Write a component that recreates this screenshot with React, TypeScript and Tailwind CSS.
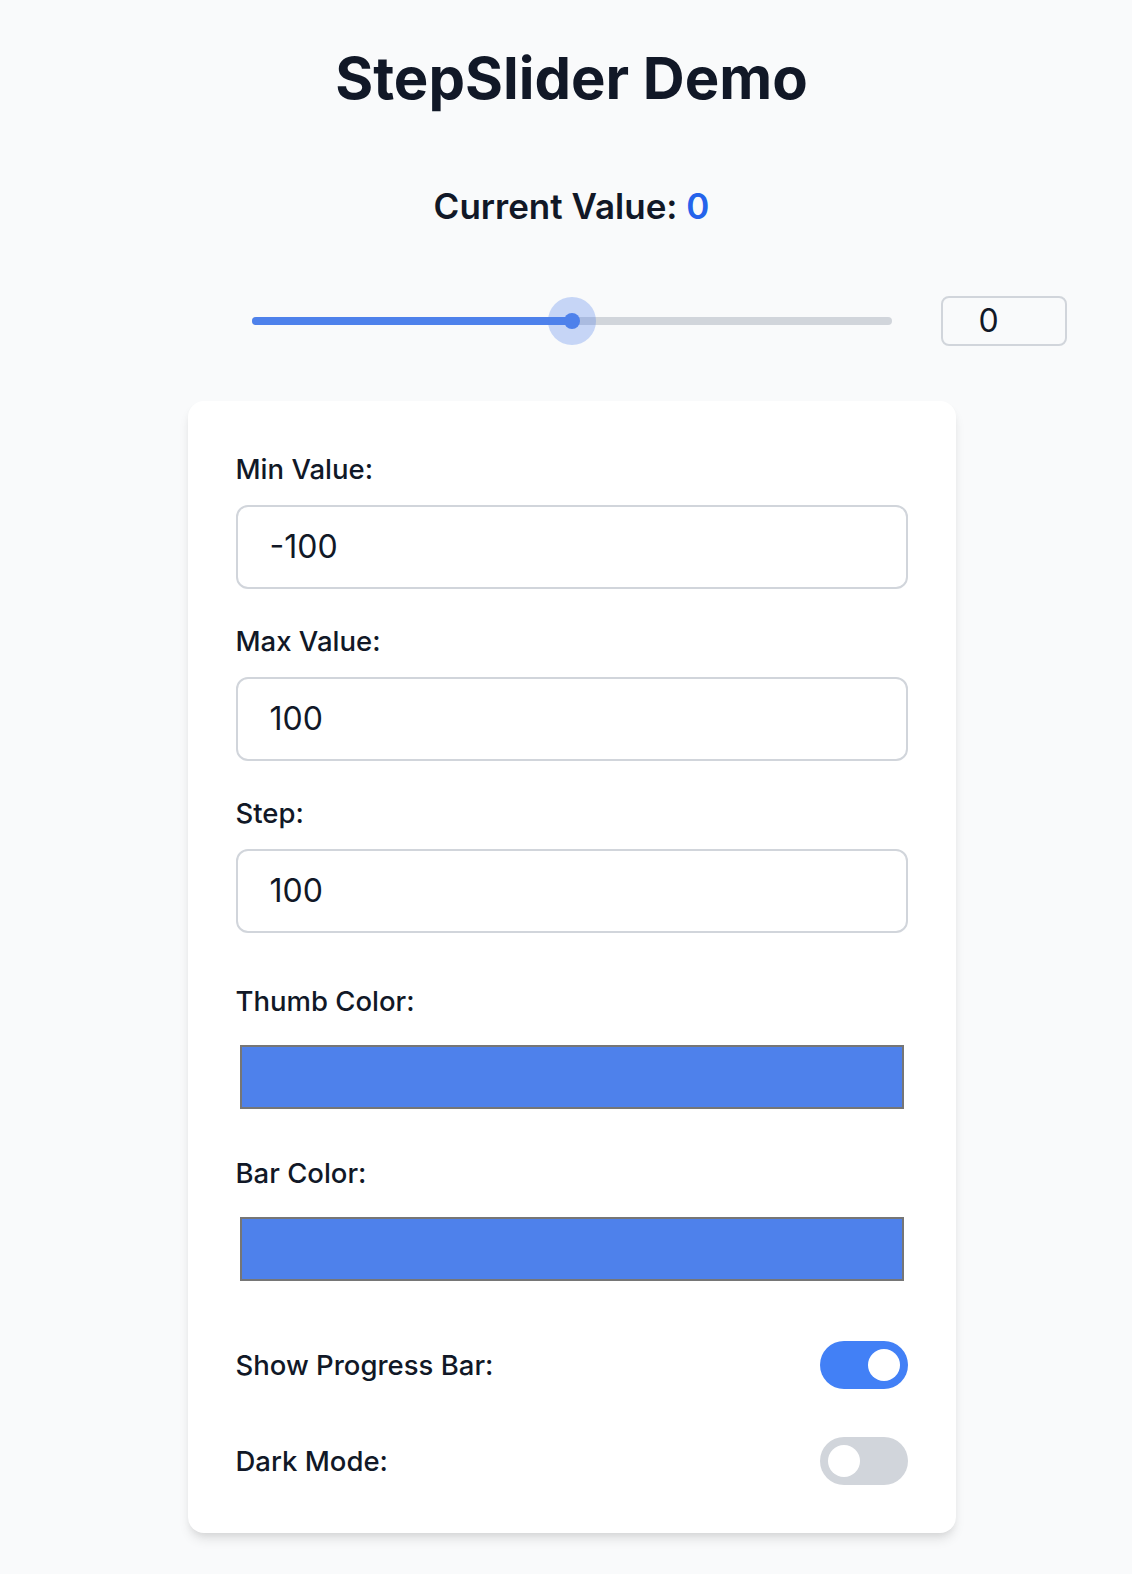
import React from "react";

const font = { fontFamily: 'Inter, "Noto Sans", "Liberation Sans", sans-serif' };

function TextField({ label, value, top }: { label: string; value: string; top: string }) {
  return (
    <div className={top}>
      <label className="block text-[27.5px] leading-[40px] font-medium text-[#111827] mb-[16px]">{label}</label>
      <div className="h-[84px] w-full border-2 border-[#d1d5db] rounded-[12px] bg-white px-[32px] flex items-center text-[32px] text-[#111827]">
        {value}
      </div>
    </div>
  );
}

function ColorField({ label, top }: { label: string; top: string }) {
  return (
    <div className={top}>
      <label className="block text-[27.5px] leading-[40px] font-medium text-[#111827] mb-[16px]">{label}</label>
      <div className="h-[80px] w-full px-[4px] py-[8px]">
        <div className="h-full w-full border-2 border-[#767676] bg-[#4e81eb]" />
      </div>
    </div>
  );
}

function Toggle({ on }: { on: boolean }) {
  return (
    <div
      className={
        on
          ? "w-[88px] h-[48px] rounded-full bg-[#4280f6] flex items-center justify-end px-[8px]"
          : "w-[88px] h-[48px] rounded-full bg-[#d1d5db] flex items-center justify-start px-[8px]"
      }
    >
      <div className="w-[32px] h-[32px] rounded-full bg-white" />
    </div>
  );
}

export default function App() {
  return (
    <div className="min-h-screen bg-[#f9fafb] pl-[11px] pb-[40px]" style={font}>
      <h1 className="pt-[42px] text-center text-[58px] leading-[72px] font-bold text-[#111827]">
        StepSlider Demo
      </h1>
      <div className="mt-[68px] text-center text-[35px] leading-[48px] font-semibold text-[#111827]">
        Current Value: <span className="text-[#2563eb]">0</span>
      </div>
      <div className="mt-[66px] grid grid-cols-[1fr_640px_1fr] items-center h-[50px]">
        <div />
        <div className="relative h-[48px] flex items-center">
          <div className="w-full h-[8px] rounded-full bg-[#d1d5db] flex">
            <div className="w-1/2 h-full rounded-full bg-[#4e81eb]" />
          </div>
          <div className="absolute left-[296px] top-0 w-[48px] h-[48px] rounded-full bg-[#4e81eb]/30 flex items-center justify-center">
            <div className="w-[16px] h-[16px] rounded-full bg-[#4e81eb]" />
          </div>
        </div>
        <div className="pl-[49px]">
          <div className="w-[126px] h-[50px] border-2 border-[#d1d5db] rounded-[8px] bg-transparent flex items-center justify-center pr-[30px] text-[32px] text-[#111827]">
            0
          </div>
        </div>
      </div>
      <div className="mt-[55px] mx-auto w-[768px] bg-white rounded-[16px] p-[48px] shadow-[0_8px_12px_-2px_rgba(0,0,0,0.1),0_4px_8px_-4px_rgba(0,0,0,0.1)]">
        <TextField label="Min Value:" value="-100" top="" />
        <TextField label="Max Value:" value="100" top="mt-[32px]" />
        <TextField label="Step:" value="100" top="mt-[32px]" />
        <ColorField label="Thumb Color:" top="mt-[48px]" />
        <ColorField label="Bar Color:" top="mt-[36px]" />
        <div className="mt-[52px] flex items-center justify-between">
          <span className="text-[27.5px] leading-[40px] font-medium text-[#111827]">Show Progress Bar:</span>
          <Toggle on={true} />
        </div>
        <div className="mt-[48px] flex items-center justify-between">
          <span className="text-[27.5px] leading-[40px] font-medium text-[#111827]">Dark Mode:</span>
          <Toggle on={false} />
        </div>
      </div>
    </div>
  );
}
